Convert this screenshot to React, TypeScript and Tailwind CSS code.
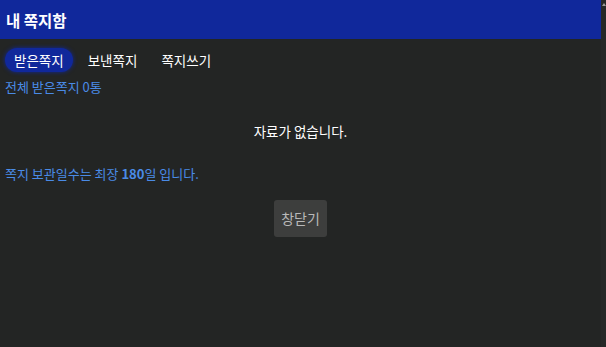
import React from "react";

const font = { fontFamily: '"Noto Sans CJK KR", "Liberation Sans", sans-serif' };

function Tab({ label, active }: { label: string; active?: boolean }) {
  return (
    <button
      className={
        active
          ? "h-[24px] px-[9px] rounded-full bg-[#10289b] text-white text-[13.5px] leading-[24px] shadow-[0_0_4px_#10289b]"
          : "h-[24px] px-[9px] rounded-full text-white text-[13.5px] leading-[24px]"
      }
    >
      {label}
    </button>
  );
}

export default function App() {
  return (
    <div className="flex w-[606px] h-[347px] bg-[#232524] overflow-hidden" style={font}>
      <div className="flex-1 flex flex-col">
        <header className="h-[39px] bg-[#10289b] flex items-center px-[6px]">
          <h1 className="text-white text-[15.5px] font-bold leading-[20px]">내 쪽지함</h1>
        </header>

        <nav className="flex items-center gap-[6px] px-[5px] mt-[9px]">
          <Tab label="받은쪽지" active />
          <Tab label="보낸쪽지" />
          <Tab label="쪽지쓰기" />
        </nav>

        <p className="px-[5px] mt-[6px] text-[13px] leading-[18px] text-[#4a8be6]">전체 받은쪽지 0통</p>

        <p className="mt-[26px] text-center text-[13.5px] leading-[18px] text-white">자료가 없습니다.</p>

        <p className="px-[5px] mt-[25px] text-[13px] leading-[18px] text-[#4a8be6]">
          쪽지 보관일수는 최장 <b>180</b>일 입니다.
        </p>

        <div className="flex justify-center mt-[17px]">
          <button className="w-[53px] h-[37px] rounded-[3px] bg-[#3d3e3d] text-[14px] text-[#b9b9b9]">
            창닫기
          </button>
        </div>
      </div>

      <div className="w-[5px] bg-[#262827] flex flex-col items-center pt-[3px]">
        <div className="w-0 h-0 border-l-[2px] border-r-[2px] border-b-[3px] border-l-transparent border-r-transparent border-b-[#9a9a9a]" />
      </div>
    </div>
  );
}
